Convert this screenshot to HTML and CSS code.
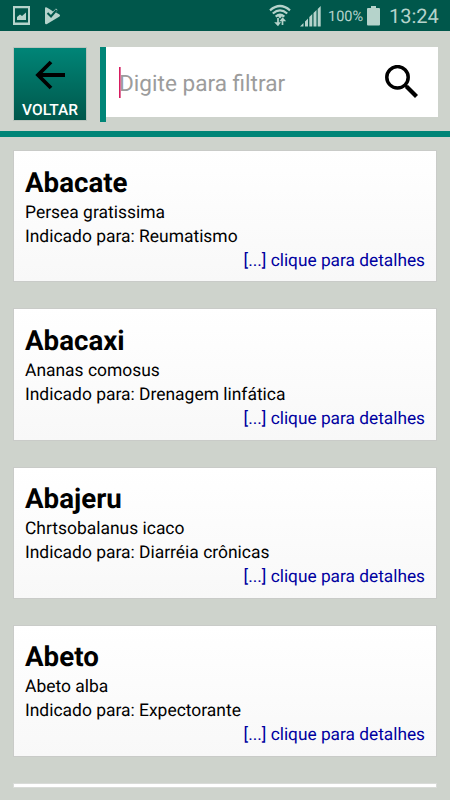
FILE: index.html
```html
<!DOCTYPE html>
<html lang="pt-BR">
<head>
<meta charset="utf-8">
<title>Plantas</title>
<link rel="stylesheet" href="styles.css">
</head>
<body>
<div class="status">
  <svg class="status-left" width="70" height="31" viewBox="0 0 70 31">
    <path fill="#b5d3cb" fill-rule="evenodd" d="M13 6h17v19H13zM15 8.300v14.200h13V8.300z"/>
    <path fill="#b5d3cb" d="M17 20v-3l3-2.500 2 1.500 4-3.500v7.500z"/>
    <path fill="#b5d3cb" d="M45 8.500q0-1.800 1.800-1L51 10l2 1.500 3-3 1.500 1.500-1.500 2.500 3.500 2q1.200 1 0 2L47 24q-1.800.7-2-1z"/>
    <path fill="none" stroke="#00574b" stroke-width="2" d="M47.500 13l3.500 3.500 5.500-6.500"/>
  </svg>
  <svg class="wifi" width="22" height="24" viewBox="0 0 22 24">
    <g fill="none" stroke="#b5d3cb" stroke-width="2.200">
      <path d="M1 6.300Q11-2.300 21 6.300M3.800 9.500Q11 3.200 18.200 9.500M6.700 12.600Q11 8.900 15.300 12.600"/>
      <path stroke-width="1.700" d="M9 14v6M13.500 21v-6"/>
    </g>
    <path fill="#b5d3cb" d="M9 12.500l2-1 2 1-2 2zM5.200 18.300h6.800L9 22.300zM10.300 17.200h6.900L13.600 13.200z"/>
  </svg>
  <svg class="signal" width="21" height="21" viewBox="0 0 21 21">
    <path fill="#b5d3cb" d="M0 20.500L3.500 17v3.500zM5 20.500v-5l3-3v8zM9.300 20.500V11l3-3v12.500zM13.500 20.500V7l3-3v16.500zM17.700 20.500V3L20.700 0v20.500z"/>
  </svg>
  <span class="percent">100%</span>
  <svg class="battery" width="13" height="20" viewBox="0 0 13 20"><path fill="#b5d3cb" d="M4 0h5v2h3q1 0 1 1v15.500q0 1-1 1H1q-1 0-1-1V3q0-1 1-1h3z"/></svg>
  <span class="clock">13:24</span>
</div>
<header class="toolbar">
  <div class="back">
    <svg width="30" height="30" viewBox="0 0 30 30"><path fill="none" stroke="#000" stroke-width="3.800" d="M16 2L3 15l13 13M3 15H30"/></svg>
    <span class="back-label">VOLTAR</span>
  </div>
  <div class="search">
    <div class="field">
      <span class="caret"></span>
      <span class="hint">Digite para filtrar</span>
      <svg class="lens" width="34" height="34" viewBox="0 0 34 34"><g fill="none" stroke="#000"><circle cx="12.500" cy="12.300" r="10.700" stroke-width="3.500"/><path d="M20 20l2.500 2.500" stroke-width="3"/><path d="M21.500 21.500l10 10" stroke-width="4.200"/></g></svg>
    </div>
  </div>
</header>
<main class="list">
  <article class="card"><h2>Abacate</h2><p>Persea gratissima</p><p>Indicado para: Reumatismo</p><a>[...] clique para detalhes</a></article>
  <article class="card"><h2>Abacaxi</h2><p>Ananas comosus</p><p>Indicado para: Drenagem linfática</p><a>[...] clique para detalhes</a></article>
  <article class="card"><h2>Abajeru</h2><p>Chrtsobalanus icaco</p><p>Indicado para: Diarréia crônicas</p><a>[...] clique para detalhes</a></article>
  <article class="card"><h2>Abeto</h2><p>Abeto alba</p><p>Indicado para: Expectorante</p><a>[...] clique para detalhes</a></article>
  <div class="card-edge"></div>
</main>
</body>
</html>
```

FILE: styles.css
```css
* { box-sizing: border-box; }
body {
  margin: 0;
  height: 800px;
  overflow: hidden;
  background: #ced3cc;
  color: #000;
  font-family: Roboto, sans-serif;
  text-rendering: geometricPrecision;
}
svg { display: block; flex: none; }
.status {
  height: 31px;
  display: flex;
  align-items: flex-start;
  background: #00574b;
  color: #b5d3cb;
}
.status-left { margin-right: auto; }
.wifi { margin: 4px 9px 0 0; }
.signal { margin: 5.500px 7px 0 0; }
.percent { width: 35px; margin-right: 4px; font-size: 14.500px; line-height: 33px; white-space: nowrap; }
.battery { margin: 5.500px 9px 0 0; }
.clock { width: 61px; font-size: 20px; line-height: 33px; }
.toolbar {
  height: 106px;
  padding: 16px 12px 0 13px;
  display: flex;
  align-items: flex-start;
  border-bottom: 6px solid #008577;
}
.back {
  width: 74px;
  height: 74px;
  border: 1px solid #b9c3bc;
  background: linear-gradient(#008577, #00574b);
  display: flex;
  flex-direction: column;
  align-items: center;
  padding-top: 12px;
}
.back-label {
  margin-top: 8px;
  color: #fff;
  font-size: 15.500px;
  font-weight: 500;
  line-height: 25px;
}
.search { flex: 1; height: 75px; margin-left: 13px; border-left: 6px solid #008577; }
.field { height: 70px; display: flex; align-items: center; background: #fff; padding: 0 19px 0 13px; }
.caret {
  position: relative;
  z-index: 1;
  flex: none;
  width: 2px;
  height: 31px;
  background: linear-gradient(90deg, #d81b60 50%, #e0709a 50%);
}
.hint { margin-left: -2px; color: #9c9c9c; font-size: 22.600px; line-height: 30px; padding-top: 3px; }
.lens { margin-left: auto; }
.list { padding: 13px 13px 0; }
.card {
  height: 132.250px;
  margin-bottom: 26px;
  padding: 15.700px 11px 0;
  border: 1px solid #c9cbc8;
  background: linear-gradient(#fff, #f8f8f8);
  display: flex;
  flex-direction: column;
}
h2 { margin: 0 0 2px; font-size: 27.700px; line-height: 32px; font-weight: 700; }
p { margin: 0; font-size: 17.450px; line-height: 24px; white-space: nowrap; }
.card a { align-self: flex-end; color: #0000a0; font-size: 17.300px; line-height: 24px; }
.card-edge { height: 5px; border: 1px solid #d9dbd8; background: #fff; }
```
